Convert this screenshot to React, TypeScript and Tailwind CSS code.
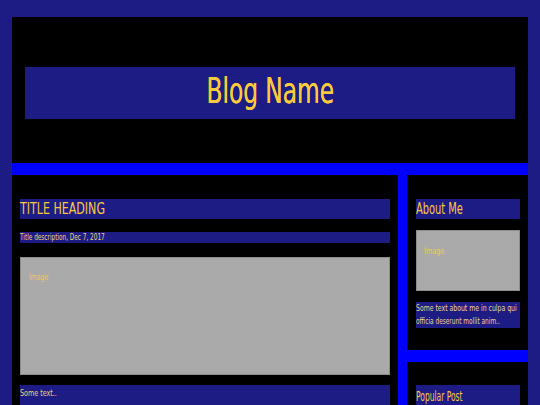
import React from "react";

const font = {
  fontFamily: '"DejaVu Sans Condensed", "Liberation Sans Narrow", "Liberation Sans", sans-serif',
};

export default function App() {
  return (
    <div
      className="min-h-screen bg-[#1c1c84] pt-[17px] px-[12px] text-[#fbc93d] font-stretch-condensed"
      style={font}
    >
      <header className="bg-black h-[146px] px-[13px] pt-[50px]">
        <div className="bg-[#1c1c84] h-[52px] flex items-center justify-center">
          <h1 className="inline-block text-[35px] leading-none scale-x-[0.74] -mt-[4px] whitespace-nowrap [text-shadow:0_0_0.6px_#fbc93d]">
            Blog Name
          </h1>
        </div>
      </header>
      <div className="bg-[#0000ff] pt-[12px] flex gap-[9px] items-start">
        <main className="bg-black w-[386px] shrink-0 h-[230px] px-[8px] pt-[24px] flex flex-col">
          <h2 className="bg-[#1c1c84] h-[20px] text-[15px] leading-[21px] whitespace-nowrap">
            <span className="inline-block origin-left scale-x-[0.82]">TITLE HEADING</span>
          </h2>
          <h5 className="bg-[#1c1c84] h-[11px] mt-[13px] text-[8px] leading-[11px] whitespace-nowrap text-[#f3d27c]">
            <span className="inline-block origin-left scale-x-[0.8]">Title description, Dec 7, 2017</span>
          </h5>
          <div className="bg-[#aaaaaa] border border-[#8c8c8c] h-[121px] mt-[14px] pl-[8px] pt-[13px] text-[9px] leading-[12px] text-[#eec94f]">
            <span className="inline-block origin-left scale-x-[0.76]">Image</span>
          </div>
          <p className="bg-[#1c1c84] h-[20px] mt-[10px] text-[9px] leading-[17px] whitespace-nowrap text-[#f3d27c]">
            <span className="inline-block origin-left scale-x-[0.79]">Some text..</span>
          </p>
        </main>
        <aside className="flex-1 min-w-0 overflow-hidden flex flex-col gap-[12px]">
          <div className="bg-black h-[175px] pl-[9px] pr-[8px] pt-[24px] flex flex-col">
            <h2 className="bg-[#1c1c84] h-[20px] text-[15px] leading-[21px] whitespace-nowrap overflow-hidden">
              <span className="inline-block origin-left scale-x-[0.73]">About Me</span>
            </h2>
            <div className="bg-[#aaaaaa] border border-[#8c8c8c] h-[61px] mt-[11px] pl-[7px] pt-[14px] text-[9px] leading-[12px] text-[#eec94f]">
              <span className="inline-block origin-left scale-x-[0.8]">Image</span>
            </div>
            <div className="bg-[#1c1c84] h-[26px] mt-[11px] text-[9px] leading-[13px] text-[#f0d38a] whitespace-nowrap overflow-hidden">
              <p className="origin-left scale-x-[0.76]">Some text about me in culpa qui</p>
              <p className="origin-left scale-x-[0.72]">officia deserunt mollit anim..</p>
            </div>
          </div>
          <div className="bg-black h-[60px] pl-[9px] pr-[8px] pt-[23px]">
            <h2 className="bg-[#1c1c84] h-[22px] text-[14px] leading-[22px] whitespace-nowrap overflow-hidden">
              <span className="inline-block origin-left scale-x-[0.6]">Popular Post</span>
            </h2>
          </div>
        </aside>
      </div>
    </div>
  );
}
